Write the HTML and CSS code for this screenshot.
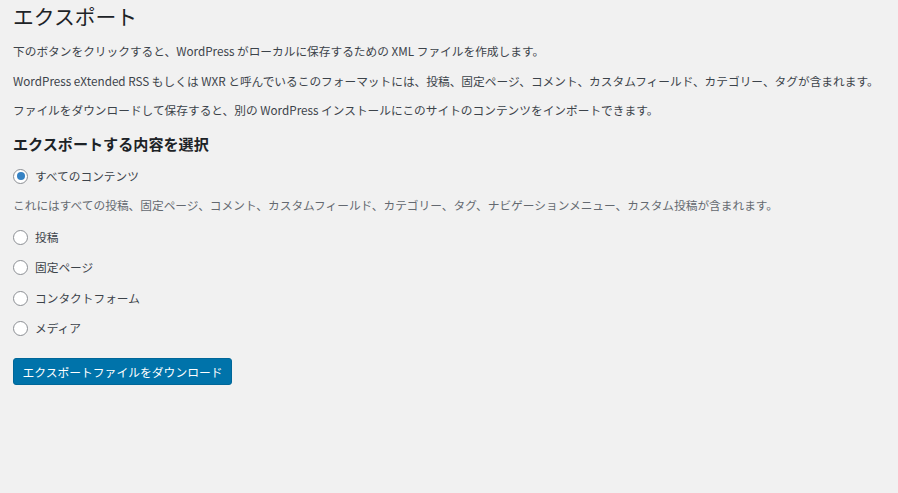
FILE: index.html
```html
<!DOCTYPE html>
<html lang="ja">
<head>
<meta charset="utf-8">
<link rel="stylesheet" href="styles.css">
<title>エクスポート</title>
</head>
<body>
<div class="wrap">
  <h1 class="title">エクスポート</h1>
  <p class="para first">下のボタンをクリックすると、WordPress がローカルに保存するための XML ファイルを作成します。</p>
  <p class="para">WordPress eXtended RSS もしくは WXR と呼んでいるこのフォーマットには、投稿、固定ページ、コメント、カスタムフィールド、カテゴリー、タグが含まれます。</p>
  <p class="para">ファイルをダウンロードして保存すると、別の WordPress インストールにこのサイトのコンテンツをインポートできます。</p>
  <h2 class="subtitle">エクスポートする内容を選択</h2>
  <label class="choice choice-all"><span class="radio checked"></span><span>すべてのコンテンツ</span></label>
  <p class="desc">これにはすべての投稿、固定ページ、コメント、カスタムフィールド、カテゴリー、タグ、ナビゲーションメニュー、カスタム投稿が含まれます。</p>
  <label class="choice choice-a"><span class="radio"></span><span>投稿</span></label>
  <label class="choice choice-b"><span class="radio"></span><span>固定ページ</span></label>
  <label class="choice choice-c"><span class="radio"></span><span>コンタクトフォーム</span></label>
  <label class="choice choice-b"><span class="radio"></span><span>メディア</span></label>
  <button class="button">エクスポートファイルをダウンロード</button>
</div>
</body>
</html>
```
FILE: styles.css
```css
html, body {
  margin: 0;
  padding: 0;
  background: #f1f1f1;
}
body {
  font-family: "Noto Sans CJK JP", "Noto Sans", sans-serif;
  font-size: 11.7px;
  color: #3c434a;
}
.wrap {
  padding: 0 13px;
  display: flex;
  flex-direction: column;
  align-items: flex-start;
}
.title {
  margin: 0;
  font-size: 20.8px;
  font-weight: 400;
  line-height: 32px;
  color: #1d2327;
}
.para {
  margin: 9.5px 0 0;
  line-height: 20px;
  white-space: nowrap;
}
.para.first { margin-top: 9px; }
.subtitle {
  margin: 11px 0 0;
  font-size: 15.1px;
  font-weight: 700;
  line-height: 24px;
  color: #1d2327;
}
.choice {
  display: flex;
  align-items: center;
  gap: 7px;
  height: 20px;
  line-height: 20px;
  margin-top: 10px;
}
.choice-all { margin-top: 11px; }
.choice-a { margin-top: 12px; }
.choice-c { margin-top: 11px; }
.radio {
  box-sizing: border-box;
  width: 15px;
  height: 15px;
  border: 1px solid #8c8f94;
  border-radius: 50%;
  background: #fff;
  display: flex;
  align-items: center;
  justify-content: center;
}
.radio.checked::after {
  content: "";
  width: 8px;
  height: 8px;
  border-radius: 50%;
  background: #3582c4;
}
.desc {
  margin: 9px 0 0;
  line-height: 20px;
  color: #646970;
  white-space: nowrap;
}
.button {
  margin-top: 20px;
  width: 219px;
  height: 27px;
  padding: 0;
  border: 1px solid #006799;
  border-radius: 3px;
  background: #0073aa;
  color: #fff;
  font-family: inherit;
  font-size: 11.8px;
  line-height: 25px;
  text-align: center;
  cursor: pointer;
}
```
